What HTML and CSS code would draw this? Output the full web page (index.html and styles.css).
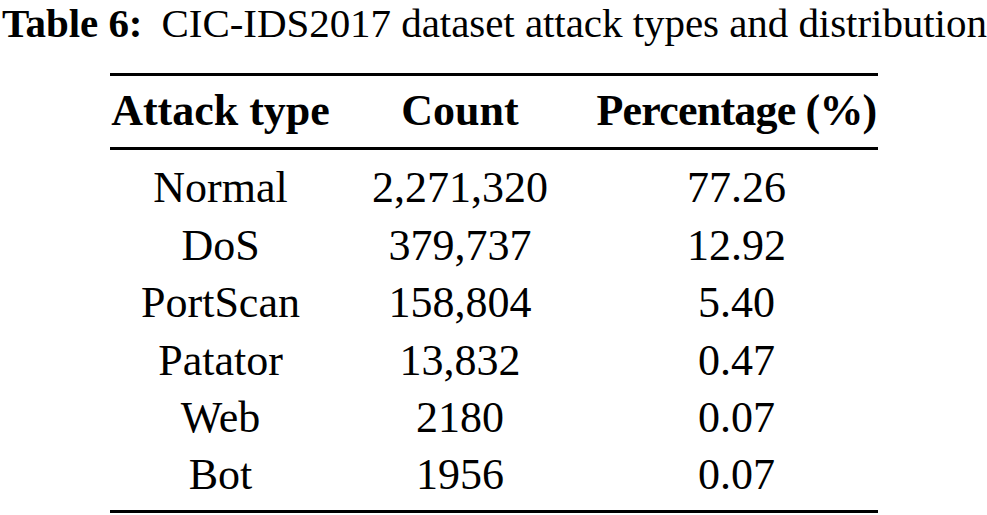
FILE: index.html
```html
<!DOCTYPE html>
<html>
<head>
<meta charset="utf-8">
<link rel="stylesheet" href="styles.css">
</head>
<body>
<div class="page">
  <p class="caption"><span class="caption-label">Table 6:</span>CIC-IDS2017 dataset attack types and distribution</p>
  <table class="data">
    <colgroup>
      <col class="c1"><col class="c2"><col class="c3">
    </colgroup>
    <thead>
      <tr><th>Attack type</th><th>Count</th><th class="pct pct-head">Percentage (%)</th></tr>
    </thead>
    <tbody>
      <tr class="first"><td>Normal</td><td>2,271,320</td><td class="pct">77.26</td></tr>
      <tr><td>DoS</td><td>379,737</td><td class="pct">12.92</td></tr>
      <tr><td>PortScan</td><td>158,804</td><td class="pct">5.40</td></tr>
      <tr><td>Patator</td><td>13,832</td><td class="pct">0.47</td></tr>
      <tr><td>Web</td><td>2180</td><td class="pct">0.07</td></tr>
      <tr class="last"><td>Bot</td><td>1956</td><td class="pct">0.07</td></tr>
    </tbody>
  </table>
</div>
</body>
</html>
```
FILE: styles.css
```css
html, body {
  margin: 0;
  padding: 0;
  background: #ffffff;
}
.page {
  width: 987px;
  height: 515px;
  overflow: hidden;
  color: #000;
  font-family: "Liberation Serif", "Times New Roman", serif;
}
.caption {
  margin: 0 0 27px 0;
  padding-left: 2px;
  font-size: 41px;
  letter-spacing: -0.05px;
  line-height: 46px;
  height: 46px;
  white-space: nowrap;
}
.caption-label {
  font-weight: bold;
  margin-right: 19px;
}
.data {
  margin-left: 110px;
  width: 768px;
  border-collapse: collapse;
  table-layout: fixed;
  font-size: 44px;
  line-height: 57.4px;
  border-top: 3px solid #000;
  border-bottom: 3px solid #000;
}
.c1 { width: 221px; }
.c2 { width: 258px; }
.c3 { width: 289px; }
.data th, .data td {
  padding: 0;
  text-align: center;
  white-space: nowrap;
}
.data th {
  font-weight: bold;
  padding-top: 5.5px;
  padding-bottom: 8px;
  border-bottom: 3px solid #000;
}
.data .pct {
  padding-left: 6px;
}
.data .pct-head {
  letter-spacing: -0.8px;
}
.data tr.first td {
  padding-top: 9.5px;
}
.data tr.last td {
  padding-bottom: 6px;
}
```
